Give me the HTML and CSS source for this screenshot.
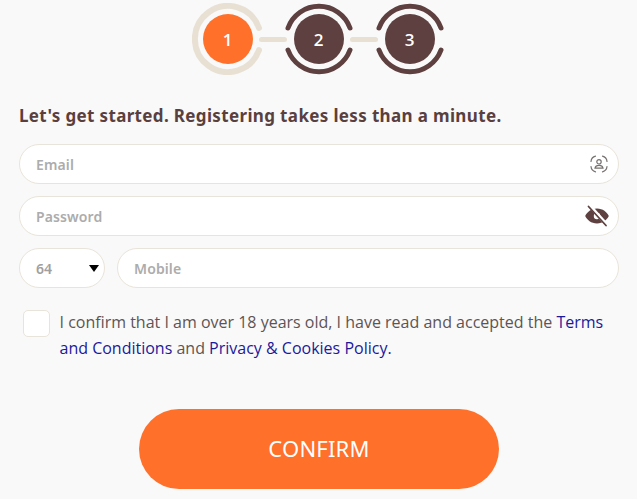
FILE: index.html
```html
<!DOCTYPE html>
<html lang="en">
<head>
<meta charset="utf-8">
<title>Register</title>
<link rel="stylesheet" href="styles.css">
</head>
<body>
<main class="page">
  <div class="stepper">
    <div class="step">
      <svg class="ring" viewBox="0 0 72 72"><path class="arc-idle" d="M67 25A33 33 0 1 0 67 47"/></svg>
      <span class="disc disc-active">1</span>
    </div>
    <span class="link"></span>
    <div class="step">
      <svg class="ring" viewBox="0 0 72 72"><path class="arc-done" d="M5 25A33 33 0 0 1 67 25M5 47A33 33 0 0 0 67 47"/></svg>
      <span class="disc">2</span>
    </div>
    <span class="link"></span>
    <div class="step">
      <svg class="ring" viewBox="0 0 72 72"><path class="arc-done" d="M5 25A33 33 0 0 1 67 25M5 47A33 33 0 0 0 67 47"/></svg>
      <span class="disc">3</span>
    </div>
  </div>

  <h1 class="title">Let's get started. Registering takes less than a minute.</h1>

  <form class="form">
    <div class="field">
      <input class="input" type="text" placeholder="Email">
      <svg class="icon" viewBox="0 0 18 18" width="18" height="18">
        <g fill="none" stroke="#75716f" stroke-width="1.200" stroke-linecap="round">
          <path d="M1 6.500A6 6 0 0 1 5.500 1.200M12.500 1.200A6 6 0 0 1 17 6.500M1 11.500A6 6 0 0 0 5.500 16.800M12.500 16.800A6 6 0 0 0 17 11.500"/>
          <circle cx="9" cy="6.800" r="2.200"/>
          <path d="M5 13.200c.4-1.900 2.100-2.800 4-2.800s3.600.9 4 2.800z"/>
        </g>
      </svg>
    </div>
    <div class="field">
      <input class="input" type="password" placeholder="Password">
      <svg class="icon icon-eye" viewBox="0 0 24 24" width="24" height="24">
        <path fill="#5f4040" fill-rule="evenodd" d="M12 4.500c5.800 0 10 3.700 11.800 7.500C22 15.800 17.800 19.500 12 19.500S2 15.800.2 12C2 8.200 6.200 4.500 12 4.500zm0 4.300a3.200 3.200 0 1 0 0 6.400 3.200 3.200 0 0 0 0-6.400z"/>
        <path stroke="#ffffff" stroke-width="3.400" d="M4.500 1.500l17 19"/>
        <path stroke="#5f4040" stroke-width="1.800" stroke-linecap="round" d="M3.500 2.500l17.500 19"/>
      </svg>
    </div>
    <div class="phone">
      <div class="code"><span>64</span><i class="caret"></i></div>
      <input class="input mobile" type="tel" placeholder="Mobile">
    </div>

    <div class="consent">
      <span class="box"></span>
      <p class="terms">I confirm that I am over 18 years old, I have read and accepted the <a href="#">Terms and Conditions</a> and <a href="#">Privacy &amp; Cookies Policy.</a></p>
    </div>

    <button class="confirm" type="button">CONFIRM</button>
  </form>
</main>
</body>
</html>
```
FILE: styles.css
```css
* { box-sizing: border-box; }
html, body { margin: 0; height: 100%; }
body {
  background: #f9f9f9;
  font-family: "Open Sans", "Liberation Sans", sans-serif;
  overflow: hidden;
}
.page { padding: 3px 18px 0 19px; }
.stepper {
  display: flex;
  justify-content: center;
  align-items: center;
  height: 72px;
  margin-left: -1px;
}
.step {
  position: relative;
  width: 72px;
  height: 72px;
  display: flex;
  align-items: center;
  justify-content: center;
}
.ring { position: absolute; inset: 0; width: 72px; height: 72px; }
.ring path { fill: none; stroke-linecap: round; }
.arc-idle { stroke: #e8e0d3; stroke-width: 6; }
.arc-done { stroke: #5f4040; stroke-width: 5; }
.disc {
  width: 50px;
  height: 50px;
  border-radius: 50%;
  background: #5f4040;
  color: #fff;
  display: flex;
  align-items: center;
  justify-content: center;
  font-size: 17px;
  font-weight: 600;
}
.disc-active { background: #ff702a; }
.link {
  width: 28px;
  height: 5px;
  margin: 0 -4.500px;
  background: #e8e0d3;
  border-radius: 3px;
}
.title {
  margin: 29px 0 0;
  height: 24px;
  line-height: 24px;
  font-family: "Noto Sans", sans-serif;
  font-size: 17px;
  letter-spacing: 0.35px;
  font-weight: 700;
  color: #5a3f3f;
}
.form { margin-top: 16px; display: flex; flex-direction: column; }
.field { position: relative; margin-bottom: 12px; }
.input {
  display: block;
  width: 100%;
  height: 40px;
  border: 1px solid #e9e4da;
  border-radius: 20px;
  background: #fff;
  padding: 0 16px;
  font-family: "Noto Sans", sans-serif;
  font-size: 14px;
  letter-spacing: 0.12px;
  font-weight: 600;
  outline: none;
}
.input::placeholder { color: #acacac; opacity: 1; }
.icon { position: absolute; right: 11px; top: 11px; }
.icon-eye { right: 10px; top: 8px; }
.phone { display: flex; gap: 12px; }
.code {
  width: 86px;
  height: 40px;
  flex: none;
  border: 1px solid #e9e4da;
  border-radius: 20px;
  background: #fff;
  padding: 0 5px 0 16px;
  display: flex;
  align-items: center;
  justify-content: space-between;
  font-family: "Noto Sans", sans-serif;
  font-size: 14px;
  font-weight: 600;
  color: #a0a0a0;
}
.caret {
  width: 0;
  height: 0;
  border-left: 5px solid transparent;
  border-right: 5px solid transparent;
  border-top: 7px solid #000;
}
.mobile { flex: 1; width: auto; }
.consent { display: flex; margin: 22px 0 0 4px; gap: 10px; }
.box {
  width: 27px;
  height: 27px;
  flex: none;
  background: #fff;
  border: 1px solid #e9e4da;
  border-radius: 5px;
}
.terms {
  margin: -1px 0 0 -0.500px;
  font-size: 16px;
  line-height: 26px;
  color: #5e5454;
}
.terms a { color: #1a1a9c; text-decoration: none; }
.confirm {
  align-self: center;
  margin-top: 48px;
  width: 360px;
  height: 80px;
  padding: 0 0 3px;
  border: 0;
  border-radius: 40px;
  background: #ff702a;
  color: #fff;
  font-family: "Noto Sans", sans-serif;
  font-size: 22px;
  letter-spacing: 0.2px;
  font-weight: 400;
}
```
